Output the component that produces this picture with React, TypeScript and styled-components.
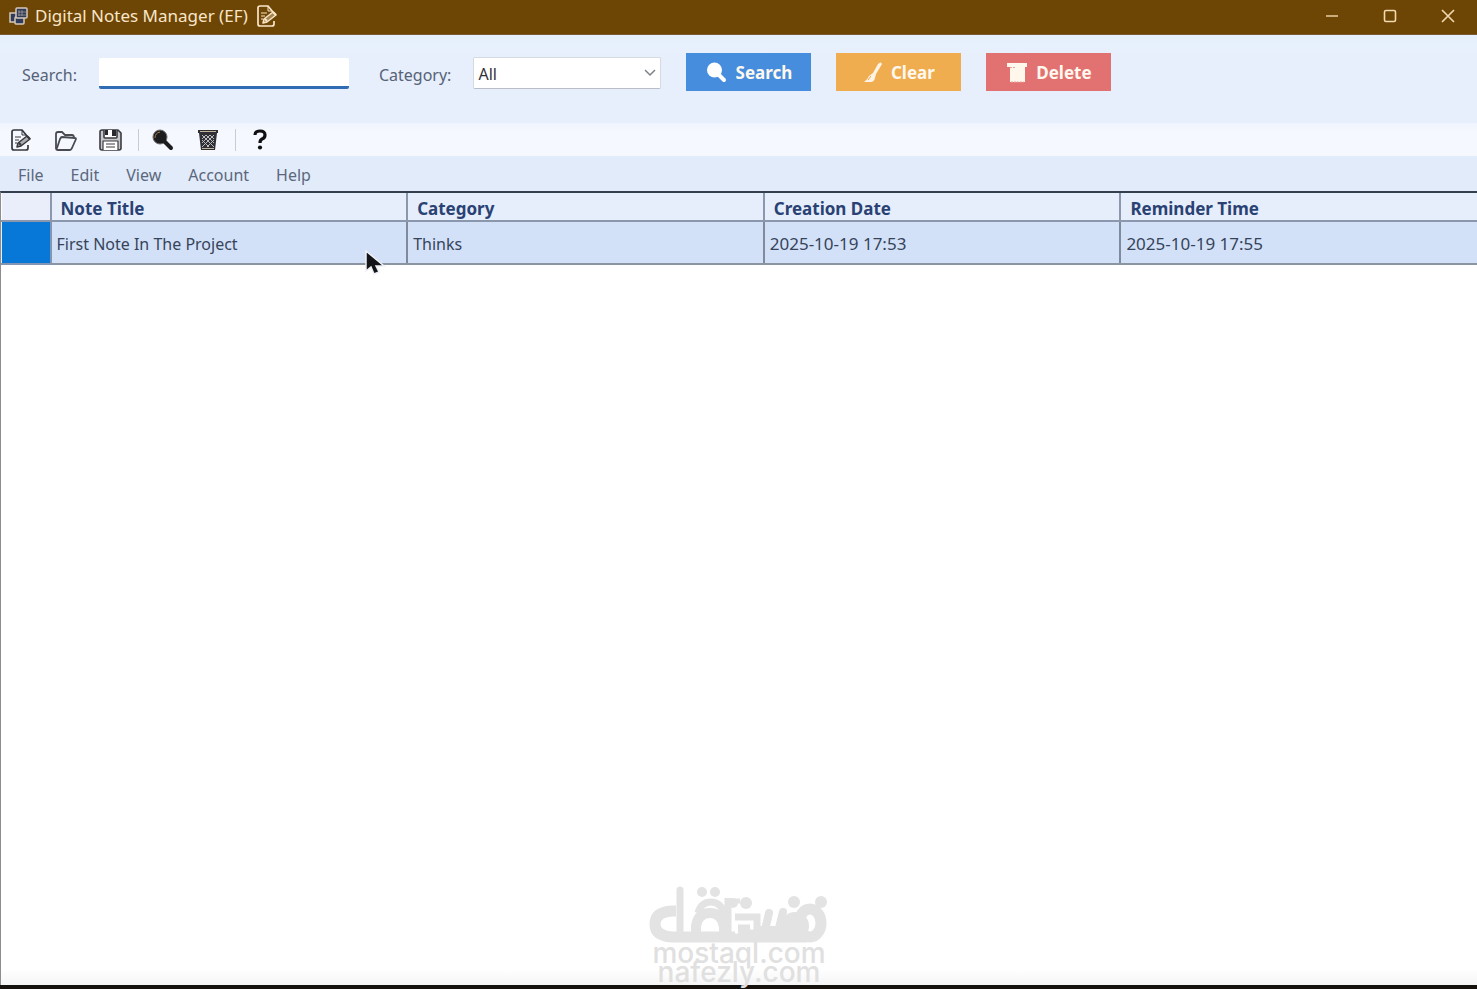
import React from "react";
import styled, { createGlobalStyle } from "styled-components";

const GlobalStyle = createGlobalStyle`
  *, *::before, *::after { box-sizing: border-box; }
  body {
    margin: 0;
    font-family: "Noto Sans", "Open Sans", sans-serif;
    font-size: 16px;
    line-height: 24px;
    color: #3c4a60;
    background: #ffffff;
  }
  button, input, select { font: inherit; color: inherit; }
`;

const Window = styled.div`
  display: flex;
  flex-direction: column;
  min-height: 100vh;
  border-bottom: 4px solid #15110d;
`;

const TitleBar = styled.header`
  display: flex;
  align-items: center;
  height: 35px;
  padding: 0 0 2px 9px;
  background: #6d4505;
  border-bottom: 1px solid #7a5c38;
  color: #fae6c8;
`;

const Title = styled.h1`
  margin: 0 9px 0 6px;
  font-size: 17px;
  font-weight: 400;
`;

const WindowControls = styled.div`
  display: flex;
  margin-left: auto;
`;

const WindowButton = styled.button`
  display: grid;
  place-items: center;
  width: 58px;
  height: 31px;
  padding: 0;
  border: 0;
  background: transparent;
  color: #f3d9b0;
`;

const SearchPanel = styled.form`
  display: flex;
  align-items: flex-start;
  height: 88px;
  padding: 18px 22px 0;
  background: linear-gradient(#e6f1fd, #e8effc 24px);
`;

const FieldLabel = styled.label`
  margin-top: 10px;
  color: #566277;
`;

const SearchInput = styled.input`
  width: 250px;
  height: 31px;
  margin: 5px 30px 0 22px;
  padding: 0 6px;
  border: 0;
  border-bottom: 3px solid #2f6cb3;
  border-radius: 2px;
  background: #ffffff;
  outline: none;
`;

const SelectBox = styled.div`
  display: grid;
  align-items: center;
  width: 188px;
  margin: 4px 25px 0 22px;
  svg {
    grid-area: 1 / 1;
    justify-self: end;
    margin-right: 4px;
    pointer-events: none;
    color: #7d8289;
  }
`;

const CategorySelect = styled.select`
  grid-area: 1 / 1;
  width: 100%;
  height: 32px;
  padding: 2px 4px 0;
  appearance: none;
  border: 1px solid #d5d9e0;
  border-bottom-color: #b9bec6;
  border-radius: 2px;
  background: #ffffff;
  color: #303338;
`;

const ActionButton = styled.button<{ $color: string }>`
  display: flex;
  align-items: center;
  justify-content: center;
  gap: 8px;
  width: 125px;
  height: 38px;
  margin-right: 25px;
  padding: 2px 0 0;
  border: 0;
  background: ${(p) => p.$color};
  color: #fff8ee;
  font-size: 17px;
  font-weight: 700;
`;

const ToolBar = styled.div`
  display: flex;
  align-items: center;
  height: 33px;
  padding: 1px 9px 0;
  background: linear-gradient(#eef4fe, #f5f8fe 8px);
`;

const ToolButton = styled.button`
  display: grid;
  place-items: center;
  width: 24px;
  height: 26px;
  margin-right: 21px;
  padding: 0;
  border: 0;
  background: transparent;
  color: #36373c;
`;

const ToolSeparator = styled.span`
  width: 1px;
  height: 22px;
  margin: 0 12px 0 -6px;
  background: #c8ccd4;
`;

const MenuBar = styled.nav`
  display: flex;
  align-items: center;
  gap: 27px;
  height: 35px;
  padding: 3px 18px 0;
  background: #e2ebfa;
`;

const MenuItem = styled.button`
  padding: 0;
  border: 0;
  background: transparent;
  color: #5b677d;
`;

const GridArea = styled.main`
  flex: 1;
  display: flex;
  flex-direction: column;
  border-top: 2px solid #333f4d;
  border-left: 1px solid #8a8d92;
  background: linear-gradient(to top, #f5f5f5, #ffffff 16px);
`;

const NotesTable = styled.table`
  width: 100%;
  table-layout: fixed;
  border-collapse: collapse;
`;

const RowHeaderCol = styled.col`
  width: 49px;
`;

const HeadCell = styled.th`
  height: 28px;
  padding: 4px 9px 0;
  border-right: 2px solid #8a97ac;
  border-bottom: 2px solid #8a97ac;
  background: #e6eefc;
  color: #2a4273;
  font-size: 17px;
  font-weight: 700;
  line-height: 22px;
  text-align: left;
  &:last-child { border-right: 0; }
`;

const CornerCell = styled.td`
  border-right: 2px solid #8a97ac;
  border-bottom: 2px solid #8a97ac;
  background: #e9eefa;
`;

const RowMarker = styled.td`
  border: 2px solid #8296b3;
  border-left: 1px solid #e6eefc;
  background: #0778d8;
`;

const Cell = styled.td<{ $numeric: boolean }>`
  height: 43px;
  padding: 2px 5px 0;
  border-right: 2px solid #7f8a9c;
  border-bottom: 2px solid #8a94a3;
  background: #d3e1f8;
  color: #36445a;
  font-size: ${(p) => (p.$numeric ? 17 : 16)}px;
  &:last-child { border-right: 0; }
`;

const Watermark = styled.div`
  display: flex;
  flex-direction: column;
  align-items: center;
  margin-top: auto;
  padding-bottom: 3px;
  color: #e0e0e0;
  font-family: Inter, sans-serif;
  font-size: 28px;
  font-weight: 500;
  line-height: 19px;
`;

const Pointer = styled.svg`
  position: absolute;
  left: 364px;
  top: 249px;
`;

const NoteIcon = () => (
  <svg width="20" height="22" viewBox="0 0 20 22" fill="none" stroke="currentColor" strokeWidth="1.7" strokeLinejoin="round">
    <path d="M16 7l-5-6H3Q1 1 1 3v16q0 2 2 2h12q2 0 2-2v-3" />
    <path d="M11 1v5h4M4 8h6M4 11h4M4 14h2" strokeWidth="1" />
    <path d="M6 18l1-4 9-7 3 3-9 7-4 1z" fill="currentColor" fillOpacity=".4" strokeWidth="1.5" />
    <path d="M16 7l3 3M8 14l2 2" strokeWidth="2" />
  </svg>
);

const AppIcon = () => (
  <svg width="20" height="18" viewBox="0 0 20 18" fill="#303b59" stroke="#d6c9b9" strokeWidth="1.5">
    <rect x="1" y="6" width="8" height="9" />
    <rect x="6" y="10" width="9" height="7" rx="1" />
    <rect x="7" y="1" width="11" height="10" rx="1" />
    <path d="M10 3v6M13 3v6M9 5h8M9 8h8" strokeWidth=".5" />
  </svg>
);

const FolderIcon = () => (
  <svg width="24" height="22" viewBox="0 0 24 22" fill="none" stroke="#4a4b51" strokeWidth="1.8" strokeLinejoin="round">
    <path d="M2 19V5q0-2 2-2h4l3 3h7q2 0 2 3" />
    <path d="M3 19l3-9q1-2 2-2l13 1q1 0 1 1l-4 9q-1 2-2 2H4q-2 0-2-2z" />
  </svg>
);

const FloppyIcon = () => (
  <svg width="24" height="22" viewBox="0 0 24 22" fill="none" stroke="#3a3b40" strokeWidth="1.6" strokeLinejoin="round">
    <path d="M3 1h16l3 3v15q0 2-2 2H3q-2 0-2-2V3q0-2 2-2z" fill="#c6c7ca" />
    <path d="M5 1v7q0 1 1 1h11q1 0 1-1V1" fill="#fff" />
    <path d="M13 1h4v6h-4zM6 1h3v5H6z" fill="#29292d" stroke="none" />
    <path d="M4 21v-9h15v9" fill="#fff" strokeWidth="1.2" />
    <path d="M7 15h9M7 18h9" strokeWidth="1" />
  </svg>
);

const MagnifierIcon = () => (
  <svg width="22" height="22" viewBox="0 0 22 22">
    <circle cx="8" cy="8" r="7" fill="#1d1d20" stroke="#6d6a6c" strokeWidth="1" />
    <path d="M13 13l6 6" stroke="#1d1d20" strokeWidth="4" strokeLinecap="round" />
    <path d="M3 9q0-5 5-6" fill="none" stroke="#a87a4d" strokeWidth="1" />
  </svg>
);

const BasketIcon = () => (
  <svg width="22" height="22" viewBox="0 0 22 22">
    <path d="M1 1h20v3h-1l-2 17H4L2 4H1z" fill="#303034" />
    <path d="M3 2.5h16" stroke="#c4b49c" strokeWidth="1" />
    <path d="M5 6l12 12M9 6l8 8M13 6l4 4M5 11l7 7M17 6L5 18M13 6l-8 8M9 6l-4 4M17 11l-7 7" stroke="#b9bbc0" strokeWidth="1" />
    <path d="M5 19.5h12" stroke="#c4b49c" strokeWidth="1" />
  </svg>
);

const QuestionIcon = () => (
  <svg width="16" height="22" viewBox="0 0 16 22">
    <path d="M3 6q0-4 5-4t5 4q0 3-3 4-2 1-2 4" fill="none" stroke="#101012" strokeWidth="3.2" />
    <circle cx="8" cy="18.5" r="2.1" fill="#101012" />
  </svg>
);

const SolidMagnifier = () => (
  <svg width="22" height="22" viewBox="0 0 22 22" fill="#ffffff">
    <circle cx="8.5" cy="8" r="7.5" />
    <path d="M13 13l5 5" stroke="#fff" strokeWidth="4" strokeLinecap="round" />
  </svg>
);

const BrushIcon = () => (
  <svg width="20" height="22" viewBox="0 0 20 22" fill="#fff4e4">
    <path d="M15 2q3-3 4 0l-6 10-1 4q-1 4-4 4H1q4-3 5-6l4-3z" />
    <path d="M5 18l3-4" stroke="#efad50" strokeWidth="1" />
  </svg>
);

const BinIcon = () => (
  <svg width="22" height="22" viewBox="0 0 22 22" fill="#fff6ec">
    <path d="M1 1h20v4h-2v15H4V5H1z" />
    <path d="M4 5.5h6M5 20h13" stroke="#e8a79e" strokeWidth="1" strokeDasharray="2 1" />
  </svg>
);

const WatermarkLogo = () => (
  <svg width="180" height="58" viewBox="0 0 180 58" fill="none" stroke="#e3e3e3" aria-hidden="true">
    <path d="M27 25H23Q6 26 6 38t17 13h63" strokeWidth="11" />
    <path d="M31 4v44" strokeWidth="7" strokeLinecap="round" />
    <path d="M47 50V40q2-13 14-13t14 14v10" strokeWidth="10" />
    <path d="M49 27q3-11 13-11 10 0 15 14" strokeWidth="7" />
    <path d="M79 12v42" strokeWidth="7" />
    <path d="M79 15h12M89 46h70" strokeWidth="5" />
    <path d="M86 52h72" strokeWidth="9" />
    <path d="M86 31h22v15M89 42h12" strokeWidth="7" />
    <path d="M120 27l-3 13M134 26l-4 16" strokeWidth="8" strokeLinecap="round" />
    <path d="M111 43h30" strokeWidth="6" />
    <ellipse cx="161" cy="37" rx="11" ry="14" strokeWidth="11" />
    <g fill="#e3e3e3" stroke="none">
      <circle cx="146" cy="40" r="14" />
      <circle cx="53" cy="6" r="5" />
      <circle cx="66" cy="6" r="5" />
      <circle cx="84" cy="17" r="5" />
      <circle cx="97" cy="17" r="6" />
      <circle cx="145" cy="16" r="6" />
      <circle cx="172" cy="16" r="6" />
    </g>
  </svg>
);

const columns = ["Note Title", "Category", "Creation Date", "Reminder Time"];
const notes = [["First Note In The Project", "Thinks", "2025-10-19 17:53", "2025-10-19 17:55"]];
const menus = ["File", "Edit", "View", "Account", "Help"];

export default function App() {
  return (
    <>
      <GlobalStyle />
      <Window>
        <TitleBar>
          <AppIcon />
          <Title>Digital Notes Manager (EF)</Title>
          <NoteIcon />
          <WindowControls>
            <WindowButton aria-label="Minimize">
              <svg width="14" height="14" viewBox="0 0 14 14"><path d="M1 7h12" stroke="currentColor" strokeWidth="1.4" /></svg>
            </WindowButton>
            <WindowButton aria-label="Maximize">
              <svg width="14" height="14" viewBox="0 0 14 14"><rect x="1.5" y="1.5" width="11" height="11" rx="1.5" fill="none" stroke="currentColor" strokeWidth="1.6" /></svg>
            </WindowButton>
            <WindowButton aria-label="Close">
              <svg width="14" height="14" viewBox="0 0 14 14"><path d="M1 1l12 12M13 1L1 13" stroke="currentColor" strokeWidth="1.6" /></svg>
            </WindowButton>
          </WindowControls>
        </TitleBar>

        <SearchPanel onSubmit={(e) => e.preventDefault()}>
          <FieldLabel htmlFor="search">Search:</FieldLabel>
          <SearchInput id="search" type="text" />
          <FieldLabel htmlFor="category">Category:</FieldLabel>
          <SelectBox>
            <CategorySelect id="category" defaultValue="All">
              <option>All</option>
            </CategorySelect>
            <svg width="14" height="10" viewBox="0 0 14 10"><path d="M2 2l5 5 5-5" fill="none" stroke="currentColor" strokeWidth="1.5" /></svg>
          </SelectBox>
          <ActionButton type="submit" $color="#468ddd"><SolidMagnifier />Search</ActionButton>
          <ActionButton type="button" $color="#efad50"><BrushIcon />Clear</ActionButton>
          <ActionButton type="button" $color="#e27271"><BinIcon />Delete</ActionButton>
        </SearchPanel>

        <ToolBar role="toolbar" aria-label="Notes">
          <ToolButton aria-label="New note"><NoteIcon /></ToolButton>
          <ToolButton aria-label="Open"><FolderIcon /></ToolButton>
          <ToolButton aria-label="Save"><FloppyIcon /></ToolButton>
          <ToolSeparator />
          <ToolButton aria-label="Find"><MagnifierIcon /></ToolButton>
          <ToolButton aria-label="Delete note"><BasketIcon /></ToolButton>
          <ToolSeparator />
          <ToolButton aria-label="About"><QuestionIcon /></ToolButton>
        </ToolBar>

        <MenuBar>
          {menus.map((name) => <MenuItem key={name}>{name}</MenuItem>)}
        </MenuBar>

        <GridArea>
          <NotesTable>
            <colgroup>
              <RowHeaderCol />
              {columns.map((name) => <col key={name} />)}
            </colgroup>
            <thead>
              <tr>
                <CornerCell />
                {columns.map((name) => <HeadCell key={name} scope="col">{name}</HeadCell>)}
              </tr>
            </thead>
            <tbody>
              {notes.map((note) => (
                <tr key={note[0]}>
                  <RowMarker />
                  {note.map((value, i) => <Cell key={value} $numeric={i > 1}>{value}</Cell>)}
                </tr>
              ))}
            </tbody>
          </NotesTable>
          <Watermark>
            <WatermarkLogo />
            <span>mostaql.com</span>
            <span>nafezly.com</span>
          </Watermark>
        </GridArea>
      </Window>
      <Pointer width="24" height="28" viewBox="0 0 24 28" aria-hidden="true">
        <path d="M2 2v20l5-4 3 7 5-2-3-6h8z" fill="#141518" stroke="#eef1f7" strokeWidth="1.5" />
      </Pointer>
    </>
  );
}
